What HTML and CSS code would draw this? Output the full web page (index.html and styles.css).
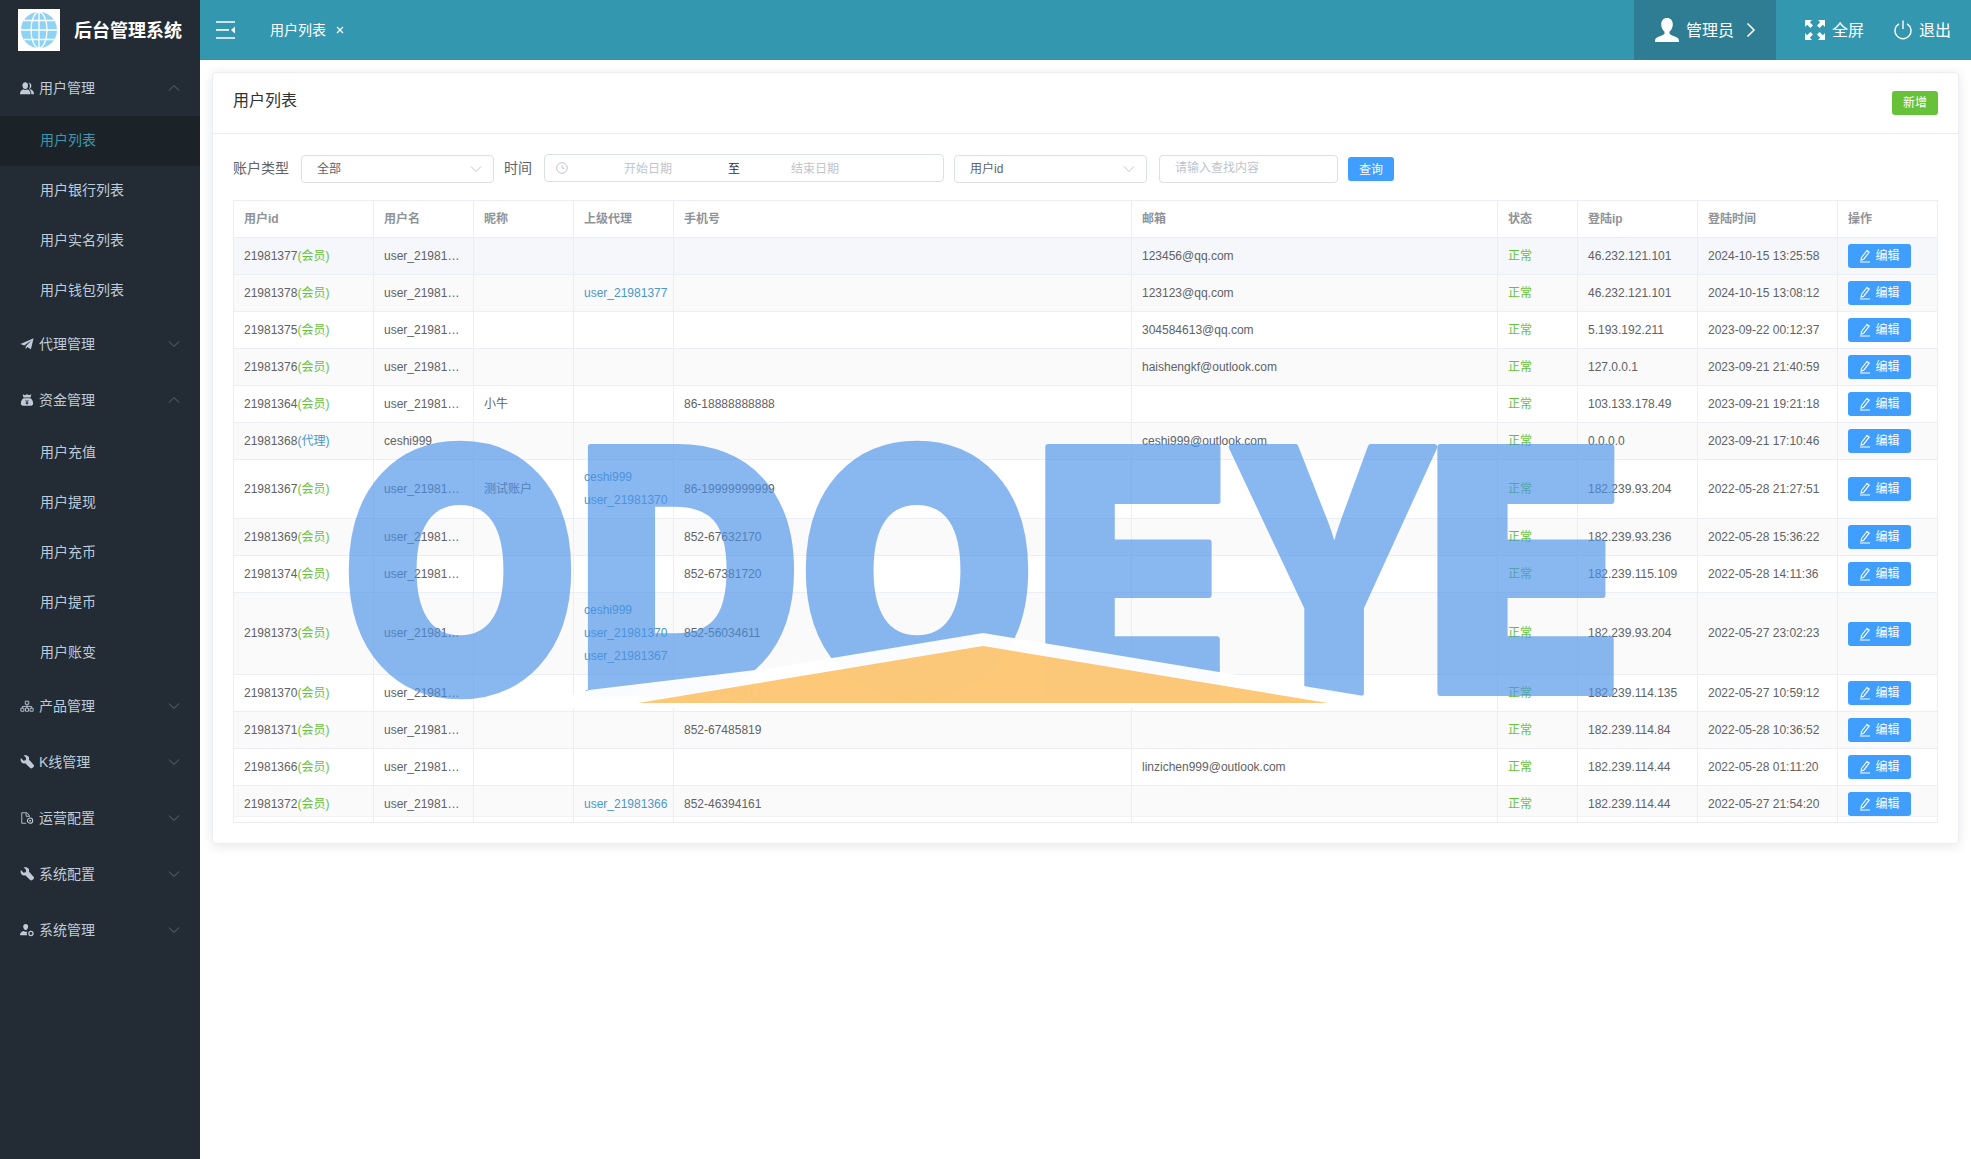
FILE: index.html
```html
<!DOCTYPE html>
<html>
<head>
    <title>后台管理系统</title>
    <link rel="stylesheet" href="styles.css">
</head>
<body>
    <svg class="sprites" width="0" height="0">
        <symbol id="chev" viewBox="0 0 12 8"><path d="M1 1.500l5 5 5-5" fill="none" stroke="currentColor" stroke-width="1"/></symbol>
        <symbol id="wrench" viewBox="0 0 16 16"><path d="M1 3.500l3 3 2.500-.6.6-2.500-3-3C6.500-.2 9 .4 9.900 2c.6 1.100.6 2.300.2 3.200L15.500 11c.7.800.7 1.800 0 2.600l-1.400 1.300c-.8.700-1.800.7-2.500 0L6 9.500c-1.400.5-3 .2-4.100-.9C.7 7.400.4 5.200 1 3.500z" fill="currentColor"/></symbol>
        <symbol id="pen" viewBox="0 0 12 14"><path d="M2.500 8.500L8 1.500l2.200 1.700-5.500 7-2.600 1zM1 13h10" fill="none" stroke="currentColor" stroke-width="1.100"/></symbol>
    </svg>

    <aside class="sidebar">
        <div class="brand">
            <div class="logo">
                <svg width="38" height="38" viewBox="0 0 38 38">
                    <circle cx="19" cy="19" r="18" fill="#8ed2f4"/>
                    <g fill="none" stroke="#fff" stroke-width="1.300">
                        <ellipse cx="19" cy="19" rx="8" ry="18"/>
                        <path d="M19 1v36M1 19h36M4 9.500h30M4 28.500h30"/>
                    </g>
                </svg>
            </div>
            <span class="brand-name">后台管理系统</span>
        </div>
        <ul class="menu">
            <li class="menu-title">
                <svg class="menu-icon" viewBox="0 0 16 16"><path d="M6 1.500c2 0 3.200 1.500 3.200 3.500S8 9 6 9 2.800 7 2.800 5 4 1.500 6 1.500zM0 15c0-3 1.500-4.800 3.800-5.500.7.600 1.400.8 2.200.8s1.500-.2 2.200-.8c2.300.7 3.800 2.500 3.800 5.500z" fill="currentColor"/><path d="M10 2c1.900.2 3 1.600 3 3.300 0 1.800-1.100 3.700-2.800 3.800.9-1.200 1.200-2.700 1-4.200-.1-1.100-.5-2.100-1.200-2.900zM13 15c0-2.200-.9-4-2.400-5.200l1.500-.4c2.300.7 3.900 2.600 3.900 5.600z" fill="currentColor"/></svg>
                <span>用户管理</span>
                <svg class="chevron up"><use href="#chev"/></svg>
            </li>
            <li class="menu-sub active">用户列表</li>
            <li class="menu-sub">用户银行列表</li>
            <li class="menu-sub">用户实名列表</li>
            <li class="menu-sub">用户钱包列表</li>
            <li class="menu-title">
                <svg class="menu-icon" viewBox="0 0 16 16"><path d="M15.500 1.500L12.500 14 8.300 11.500 6.500 14V10.800L13 4 4.800 9.800.5 8z" fill="currentColor"/></svg>
                <span>代理管理</span>
                <svg class="chevron"><use href="#chev"/></svg>
            </li>
            <li class="menu-title">
                <svg class="menu-icon" viewBox="0 0 16 16"><path d="M3 1.500l2.500 1L8 1.500l2.500 1 2.500-1-1 3.500H4zM4 6h8c2 1.500 3 3.500 3 6 0 1.500-.8 2.500-2.500 2.500h-9C1.800 14.500 1 13.500 1 12c0-2.500 1-4.500 3-6z" fill="currentColor"/><path d="M6.300 8l1.700 2 1.700-2M6.500 10.500h3M6.500 12h3M8 10v3.200" fill="none" stroke="#232c34" stroke-width=".9"/></svg>
                <span>资金管理</span>
                <svg class="chevron up"><use href="#chev"/></svg>
            </li>
            <li class="menu-sub">用户充值</li>
            <li class="menu-sub">用户提现</li>
            <li class="menu-sub">用户充币</li>
            <li class="menu-sub">用户提币</li>
            <li class="menu-sub">用户账变</li>
            <li class="menu-title">
                <svg class="menu-icon" viewBox="0 0 16 16"><path d="M6 2.500h4v3.500H6zM1 10.500h3.500V14H1zM6.300 10.500h3.500V14H6.300zM11.500 10.500H15V14h-3.500zM8 6v2.500M2.700 10.500V8.500h10.600v2M8 8.500v2" fill="none" stroke="currentColor" stroke-width="1"/></svg>
                <span>产品管理</span>
                <svg class="chevron"><use href="#chev"/></svg>
            </li>
            <li class="menu-title">
                <svg class="menu-icon"><use href="#wrench"/></svg>
                <span>K线管理</span>
                <svg class="chevron"><use href="#chev"/></svg>
            </li>
            <li class="menu-title">
                <svg class="menu-icon" viewBox="0 0 16 16"><path d="M7 14H2V2h6l2.500 3v2M7 2.500V6h3.500" fill="none" stroke="currentColor" stroke-width="1"/><circle cx="11.500" cy="11" r="3" fill="none" stroke="currentColor" stroke-width="1.200"/><circle cx="11.500" cy="11" r="1" fill="currentColor"/></svg>
                <span>运营配置</span>
                <svg class="chevron"><use href="#chev"/></svg>
            </li>
            <li class="menu-title">
                <svg class="menu-icon"><use href="#wrench"/></svg>
                <span>系统配置</span>
                <svg class="chevron"><use href="#chev"/></svg>
            </li>
            <li class="menu-title">
                <svg class="menu-icon" viewBox="0 0 16 16"><path d="M6.500 1c1.800 0 2.800 1.300 2.800 3S8.300 8 6.500 8 3.700 5.700 3.700 4 4.700 1 6.500 1zM0 14c0-2.500 1.500-4 3.800-4.800.8.600 1.700.9 2.700.9s1.500-.2 2-.5c-.8 1-1 2.800-.3 4.400z" fill="currentColor"/><circle cx="12.500" cy="12" r="2.400" fill="none" stroke="currentColor" stroke-width="1.400"/></svg>
                <span>系统管理</span>
                <svg class="chevron"><use href="#chev"/></svg>
            </li>
        </ul>
    </aside>

    <div class="page">
        <header class="topbar">
            <svg class="toggle" width="19" height="18" viewBox="0 0 19 18">
                <path d="M0 1h19M0 8.800h13M0 17h19" stroke="#fff" stroke-width="1.700"/>
                <path d="M19 5.500v7L15 9z" fill="#fff"/>
            </svg>
            <div class="tab">
                <span>用户列表</span>
                <svg width="8" height="8" viewBox="0 0 8 8"><path d="M1 1l6 6M7 1L1 7" stroke="#fff" stroke-width="1.200"/></svg>
            </div>
            <div class="topbar-right">
                <div class="admin">
                    <svg width="24" height="26" viewBox="0 0 24 26"><path d="M12 1c3.700 0 5.800 2.600 5.800 6.300 0 3-1.300 6-3.300 7.400v2.100c.8 1 3 1.900 6 3 2.200.8 3.500 2 3.500 4.200V25H0v-1c0-2.200 1.300-3.400 3.500-4.200 3-1.100 5.200-2 6-3v-2.100c-2-1.400-3.300-4.400-3.300-7.400C6.200 3.600 8.300 1 12 1z" fill="#fff"/></svg>
                    <span>管理员</span>
                    <svg class="admin-arrow" width="10" height="16" viewBox="0 0 10 16"><path d="M1.500 1.500L8 8l-6.500 6.500" fill="none" stroke="#fff" stroke-width="1.600"/></svg>
                </div>
                <div class="top-link fullscreen">
                    <svg width="20" height="20" viewBox="0 0 20 20" fill="#fff">
                        <path d="M0 0h7L4.800 2.200 8 5.400 5.400 8 2.200 4.800 0 7zM20 0v7l-2.200-2.200L14.600 8 12 5.400l3.200-3.200L13 0zM0 20v-7l2.200 2.200L5.400 12 8 14.600l-3.200 3.200L7 20zM20 20h-7l2.200-2.200L12 14.600l2.600-2.600 3.200 3.200L20 13z"/>
                    </svg>
                    <span>全屏</span>
                </div>
                <div class="top-link logout">
                    <svg width="18" height="20" viewBox="0 0 18 20"><path d="M5 3.800A8 8 0 1 0 13 3.800M9 .5v8.500" fill="none" stroke="#fff" stroke-width="1.400"/></svg>
                    <span>退出</span>
                </div>
            </div>
        </header>

        <main class="content">
            <section class="card">
                <div class="card-header">
                    <span class="card-title">用户列表</span>
                    <button class="btn btn-green">新增</button>
                </div>
                <div class="card-body">
                    <div class="toolbar">
                        <label class="label">账户类型</label>
                        <div class="select">
                            <span>全部</span>
                            <svg class="select-arrow"><use href="#chev"/></svg>
                        </div>
                        <label class="label">时间</label>
                        <div class="date-range">
                            <svg class="clock" width="12" height="12" viewBox="0 0 12 12"><circle cx="6" cy="6" r="5.300" fill="none" stroke="#c0c4cc"/><path d="M6 3v3.200h2.500" fill="none" stroke="#c0c4cc"/></svg>
                            <span class="date-input">开始日期</span>
                            <span class="date-sep">至</span>
                            <span class="date-input">结束日期</span>
                        </div>
                        <div class="select">
                            <span>用户id</span>
                            <svg class="select-arrow"><use href="#chev"/></svg>
                        </div>
                        <div class="search-box">请输入查找内容</div>
                        <button class="btn btn-blue">查询</button>
                    </div>

                    <table class="grid">
                        <colgroup>
                            <col class="c-id"><col class="c-name"><col class="c-nick"><col class="c-parent"><col class="c-phone">
                            <col class="c-mail"><col class="c-state"><col class="c-ip"><col class="c-time"><col class="c-op">
                        </colgroup>
                        <thead>
                            <tr><th>用户id</th><th>用户名</th><th>昵称</th><th>上级代理</th><th>手机号</th><th>邮箱</th><th>状态</th><th>登陆ip</th><th>登陆时间</th><th>操作</th></tr>
                        </thead>
                        <tbody>
                            <tr class="hover">
                                <td>21981377<span class="green">(会员)</span></td><td class="clip">user_21981377</td><td></td><td></td><td></td>
                                <td>123456@qq.com</td><td class="green">正常</td><td>46.232.121.101</td><td>2024-10-15 13:25:58</td>
                                <td><button class="btn-edit"><svg width="12" height="14"><use href="#pen"/></svg>编辑</button></td>
                            </tr>
                            <tr>
                                <td>21981378<span class="green">(会员)</span></td><td class="clip">user_21981378</td><td></td><td><a class="link">user_21981377</a></td><td></td>
                                <td>123123@qq.com</td><td class="green">正常</td><td>46.232.121.101</td><td>2024-10-15 13:08:12</td>
                                <td><button class="btn-edit"><svg width="12" height="14"><use href="#pen"/></svg>编辑</button></td>
                            </tr>
                            <tr>
                                <td>21981375<span class="green">(会员)</span></td><td class="clip">user_21981375</td><td></td><td></td><td></td>
                                <td>304584613@qq.com</td><td class="green">正常</td><td>5.193.192.211</td><td>2023-09-22 00:12:37</td>
                                <td><button class="btn-edit"><svg width="12" height="14"><use href="#pen"/></svg>编辑</button></td>
                            </tr>
                            <tr>
                                <td>21981376<span class="green">(会员)</span></td><td class="clip">user_21981376</td><td></td><td></td><td></td>
                                <td>haishengkf@outlook.com</td><td class="green">正常</td><td>127.0.0.1</td><td>2023-09-21 21:40:59</td>
                                <td><button class="btn-edit"><svg width="12" height="14"><use href="#pen"/></svg>编辑</button></td>
                            </tr>
                            <tr>
                                <td>21981364<span class="green">(会员)</span></td><td class="clip">user_21981364</td><td>小牛</td><td></td><td>86-18888888888</td>
                                <td></td><td class="green">正常</td><td>103.133.178.49</td><td>2023-09-21 19:21:18</td>
                                <td><button class="btn-edit"><svg width="12" height="14"><use href="#pen"/></svg>编辑</button></td>
                            </tr>
                            <tr>
                                <td>21981368<span class="blue">(代理)</span></td><td class="clip">ceshi999</td><td></td><td></td><td></td>
                                <td>ceshi999@outlook.com</td><td class="green">正常</td><td>0.0.0.0</td><td>2023-09-21 17:10:46</td>
                                <td><button class="btn-edit"><svg width="12" height="14"><use href="#pen"/></svg>编辑</button></td>
                            </tr>
                            <tr>
                                <td>21981367<span class="green">(会员)</span></td><td class="clip">user_21981367</td><td>测试账户</td><td><a class="link">ceshi999</a><a class="link">user_21981370</a></td><td>86-19999999999</td>
                                <td></td><td class="green">正常</td><td>182.239.93.204</td><td>2022-05-28 21:27:51</td>
                                <td><button class="btn-edit"><svg width="12" height="14"><use href="#pen"/></svg>编辑</button></td>
                            </tr>
                            <tr>
                                <td>21981369<span class="green">(会员)</span></td><td class="clip">user_21981369</td><td></td><td></td><td>852-67632170</td>
                                <td></td><td class="green">正常</td><td>182.239.93.236</td><td>2022-05-28 15:36:22</td>
                                <td><button class="btn-edit"><svg width="12" height="14"><use href="#pen"/></svg>编辑</button></td>
                            </tr>
                            <tr>
                                <td>21981374<span class="green">(会员)</span></td><td class="clip">user_21981374</td><td></td><td></td><td>852-67381720</td>
                                <td></td><td class="green">正常</td><td>182.239.115.109</td><td>2022-05-28 14:11:36</td>
                                <td><button class="btn-edit"><svg width="12" height="14"><use href="#pen"/></svg>编辑</button></td>
                            </tr>
                            <tr>
                                <td>21981373<span class="green">(会员)</span></td><td class="clip">user_21981373</td><td></td><td><a class="link">ceshi999</a><a class="link">user_21981370</a><a class="link">user_21981367</a></td><td>852-56034611</td>
                                <td></td><td class="green">正常</td><td>182.239.93.204</td><td>2022-05-27 23:02:23</td>
                                <td><button class="btn-edit"><svg width="12" height="14"><use href="#pen"/></svg>编辑</button></td>
                            </tr>
                            <tr>
                                <td>21981370<span class="green">(会员)</span></td><td class="clip">user_21981370</td><td></td><td><a class="link">ceshi999</a></td><td>852-56034613</td>
                                <td></td><td class="green">正常</td><td>182.239.114.135</td><td>2022-05-27 10:59:12</td>
                                <td><button class="btn-edit"><svg width="12" height="14"><use href="#pen"/></svg>编辑</button></td>
                            </tr>
                            <tr>
                                <td>21981371<span class="green">(会员)</span></td><td class="clip">user_21981371</td><td></td><td></td><td>852-67485819</td>
                                <td></td><td class="green">正常</td><td>182.239.114.84</td><td>2022-05-28 10:36:52</td>
                                <td><button class="btn-edit"><svg width="12" height="14"><use href="#pen"/></svg>编辑</button></td>
                            </tr>
                            <tr>
                                <td>21981366<span class="green">(会员)</span></td><td class="clip">user_21981366</td><td></td><td></td><td></td>
                                <td>linzichen999@outlook.com</td><td class="green">正常</td><td>182.239.114.44</td><td>2022-05-28 01:11:20</td>
                                <td><button class="btn-edit"><svg width="12" height="14"><use href="#pen"/></svg>编辑</button></td>
                            </tr>
                            <tr>
                                <td>21981372<span class="green">(会员)</span></td><td class="clip">user_21981372</td><td></td><td><a class="link">user_21981366</a></td><td>852-46394161</td>
                                <td></td><td class="green">正常</td><td>182.239.114.44</td><td>2022-05-27 21:54:20</td>
                                <td><button class="btn-edit"><svg width="12" height="14"><use href="#pen"/></svg>编辑</button></td>
                            </tr>
                        </tbody>
                    </table>
                </div>
            </section>
        </main>
    </div>

    <!-- watermark sits over the whole page -->
    <svg class="watermark" width="1971" height="1159" viewBox="0 0 1971 1159">
        <g class="wm-letters">
            <text x="341" y="693" textLength="238" lengthAdjust="spacingAndGlyphs">O</text>
            <text x="576" y="693" textLength="226" lengthAdjust="spacingAndGlyphs">D</text>
            <text x="798" y="693" textLength="238" lengthAdjust="spacingAndGlyphs">O</text>
            <text x="1033" y="693" textLength="198" lengthAdjust="spacingAndGlyphs">E</text>
            <text x="1225" y="693" textLength="216" lengthAdjust="spacingAndGlyphs">Y</text>
            <text x="1425" y="693" textLength="200" lengthAdjust="spacingAndGlyphs">E</text>
        </g>
        <polygon class="wm-roof-edge" points="529,708 589,690 772,668 983,633 1437,708"/>
        <polygon class="wm-roof" points="638,703 983,646 1328,703"/>
    </svg>
</body>
</html>
```

FILE: styles.css
```css
* {
    box-sizing: border-box;
}
html, body {
    margin: 0;
    padding: 0;
    height: 100%;
    overflow: hidden;
}
body {
    display: flex;
    font-family: "Liberation Sans", "Noto Sans CJK SC", sans-serif;
    font-size: 12px;
    color: #606266;
    background-color: #fff;
}
.sprites {
    position: absolute;
}

/* sidebar */
.sidebar {
    width: 200px;
    flex: none;
    height: 100vh;
    background-color: #232c34;
    color: #bfcbd9;
}
.brand {
    height: 60px;
    display: flex;
    align-items: center;
    padding-left: 18px;
}
.logo {
    width: 42px;
    height: 42px;
    background-color: #fff;
    display: flex;
    align-items: center;
    justify-content: center;
}
.brand-name {
    margin-left: 14px;
    margin-bottom: 2px;
    font-size: 18px;
    font-weight: bold;
    color: #fff;
}
.menu {
    list-style-type: none;
    margin: 0;
    padding: 0;
    font-size: 14px;
}
.menu-title {
    height: 56px;
    display: flex;
    align-items: center;
    padding-left: 20px;
}
.menu-title span {
    margin-bottom: 2px;
}
.menu-icon {
    width: 14px;
    height: 14px;
    margin-right: 5px;
    color: #bfcbd9;
}
.chevron {
    width: 12px;
    height: 8px;
    margin-left: auto;
    margin-right: 20px;
    color: #5d6a75;
}
.chevron.up {
    transform: rotate(180deg);
}
.menu-sub {
    height: 50px;
    line-height: 49px;
    padding-left: 40px;
}
.menu-sub.active {
    background-color: #1b2329;
    color: #3b97ae;
}

/* top bar */
.page {
    flex: 1;
    min-width: 0;
}
.topbar {
    height: 60px;
    background-color: #3397b0;
    color: #fff;
    display: flex;
    align-items: center;
    padding-left: 16px;
}
.tab {
    margin-left: 35px;
    font-size: 14px;
    display: flex;
    align-items: center;
    gap: 10px;
}
.tab span,
.admin span,
.top-link span {
    margin-bottom: 2px;
}
.topbar-right {
    margin-left: auto;
    height: 60px;
    display: flex;
    align-items: center;
    font-size: 16px;
}
.admin {
    width: 142px;
    height: 60px;
    background-color: #2e7d92;
    display: flex;
    align-items: center;
    padding-left: 21px;
    gap: 7px;
}
.admin-arrow {
    margin-left: 5px;
}
.top-link {
    display: flex;
    align-items: center;
    gap: 7px;
}
.fullscreen {
    margin-left: 29px;
}
.logout {
    margin-left: 30px;
    margin-right: 20px;
}

/* card */
.content {
    padding: 12px 12px 0;
}
.card {
    background-color: #fff;
    border: 1px solid #ebeef5;
    border-radius: 4px;
    box-shadow: 0 2px 12px rgba(0,0,0,0.1);
}
.card-header {
    height: 61px;
    padding: 0 20px;
    border-bottom: 1px solid #ebeef5;
    display: flex;
    align-items: center;
    justify-content: space-between;
}
.card-title {
    font-size: 16px;
    color: #303133;
    margin-bottom: 9px;
}
.card-body {
    padding: 21px 20px 20px;
}
.btn {
    height: 24px;
    width: 46px;
    padding: 0 0 2px;
    border: none;
    border-radius: 3px;
    color: #fff;
    font: inherit;
    font-size: 12px;
}
.btn-green {
    background-color: #67c23a;
    margin-bottom: 1px;
}
.btn-blue {
    background-color: #409eff;
    margin-left: 10px;
}

/* filters */
.toolbar {
    height: 28px;
    display: flex;
    align-items: center;
    margin-bottom: 17px;
}
.label {
    font-size: 14px;
    margin-right: 12px;
    margin-bottom: 4px;
}
.select {
    width: 193px;
    height: 28px;
    border: 1px solid #dcdfe6;
    border-radius: 4px;
    display: flex;
    align-items: center;
    justify-content: space-between;
    padding: 0 11px 0 15px;
    margin-right: 10px;
}
.select span {
    margin-bottom: 4px;
}
.select-arrow {
    width: 12px;
    height: 8px;
    color: #c0c4cc;
}
.date-range {
    width: 400px;
    height: 28px;
    margin-bottom: 2px;
    margin-right: 10px;
    border: 1px solid #dcdfe6;
    border-radius: 4px;
    display: flex;
    align-items: center;
    padding-left: 11px;
}
.clock {
    flex: none;
}
.date-input {
    width: 160px;
    margin-bottom: 2px;
    text-align: center;
    color: #c0c4cc;
}
.date-input:last-child {
    width: 150px;
}
.date-sep {
    width: 12px;
    margin-bottom: 2px;
    text-align: center;
    color: #303133;
}
.select + .search-box {
    margin-left: 2px;
}
.search-box {
    width: 179px;
    height: 28px;
    line-height: 25px;
    border: 1px solid #dcdfe6;
    border-radius: 4px;
    padding-left: 15px;
    color: #c0c4cc;
}

/* table */
.grid {
    width: 1705px;
    table-layout: fixed;
    border-collapse: separate;
    border-spacing: 0;
    border-top: 1px solid #ebeef5;
    border-left: 1px solid #ebeef5;
}
.c-id { width: 140px; }
.c-name { width: 100px; }
.c-nick { width: 100px; }
.c-parent { width: 100px; }
.c-phone { width: 458px; }
.c-mail { width: 366px; }
.c-state { width: 80px; }
.c-ip { width: 120px; }
.c-time { width: 140px; }
.c-op { width: 100px; }
.grid th, .grid td {
    height: 37px;
    padding: 6px 10px;
    line-height: 23px;
    font-weight: normal;
    text-align: left;
    white-space: nowrap;
    border-right: 1px solid #ebeef5;
    border-bottom: 1px solid #ebeef5;
}
.grid th {
    color: #909399;
    font-weight: bold;
}
.grid tbody tr:nth-child(even) td {
    background-color: #fafafa;
}
.grid tbody tr.hover td {
    background-color: #f5f7fa;
}
.grid tbody tr:last-child td {
    box-shadow: inset 0 -5px 0 #fff, inset 0 -6px 0 #f2f2f2;
}
.clip {
    overflow: hidden;
    text-overflow: ellipsis;
}
.green {
    color: #67c23a;
}
.blue {
    color: #4a97cc;
}
.link {
    display: block;
    color: #4a97cc;
}
.btn-edit {
    width: 63px;
    height: 24px;
    padding: 0;
    border: none;
    border-radius: 3px;
    background-color: #409eff;
    color: #fff;
    font: inherit;
    display: flex;
    align-items: center;
    justify-content: center;
    gap: 4px;
}

/* watermark */
.watermark {
    position: absolute;
    top: 0;
    left: 0;
    pointer-events: none;
}
.wm-letters {
    opacity: 0.65;
    fill: #4b92e8;
    stroke: #4b92e8;
    stroke-width: 6px;
    stroke-linejoin: round;
    font-family: Inter, "Liberation Sans", sans-serif;
    font-weight: 900;
    font-size: 338px;
}
.wm-roof-edge {
    fill: #fff;
    opacity: 0.96;
}
.wm-roof {
    fill: #fca31e;
    opacity: 0.6;
}
```
